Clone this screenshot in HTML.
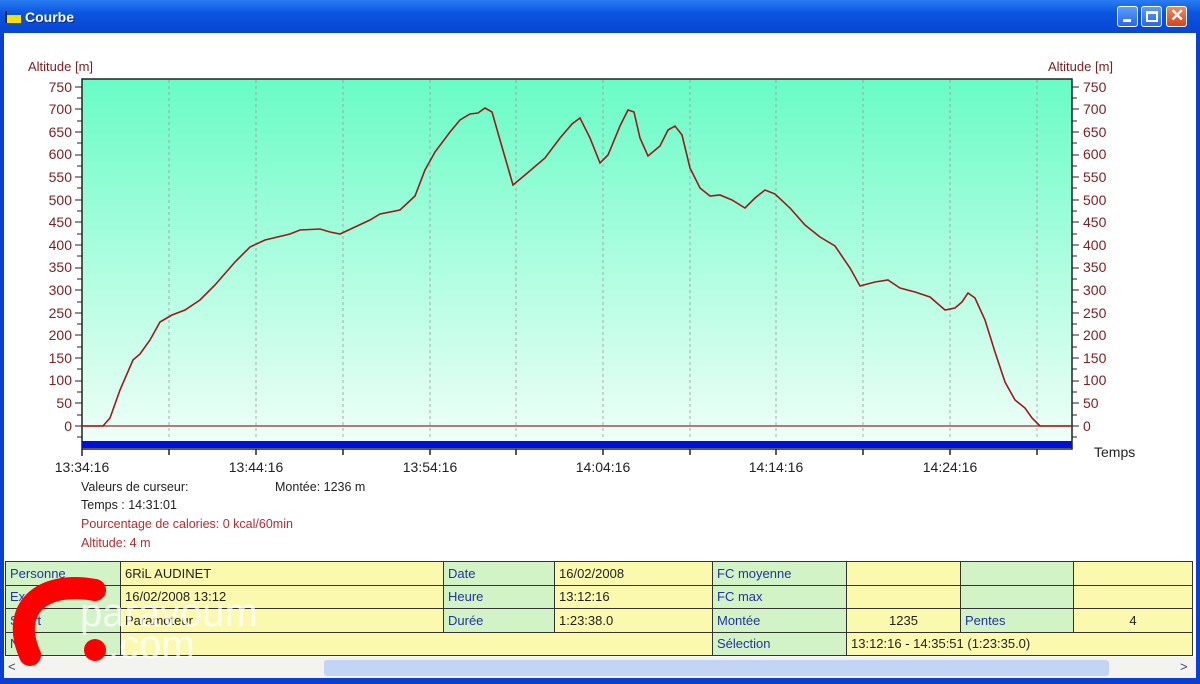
<!DOCTYPE html>
<html><head><meta charset="utf-8"><style>
*{margin:0;padding:0;box-sizing:border-box}
body{width:1200px;height:684px;overflow:hidden;background:#0a3fd6;font-family:"Liberation Sans",sans-serif;position:relative}
.title{position:absolute;left:0;top:0;width:1200px;height:33px;background:linear-gradient(#2a7cf2,#0a55e0 40%,#0845d0);}
.title span{position:absolute;left:25px;top:9px;color:#fff;font-weight:bold;font-size:14px;text-shadow:1px 1px #0a2a80}
.client{position:absolute;left:4px;top:33px;width:1192px;height:645px;background:#fff}
.btn{position:absolute;top:6px;width:21px;height:21px;border:1px solid #fff;border-radius:3px;background:linear-gradient(#5d9cf8,#2a66e8)}
table{position:absolute;left:5px;top:561px;border-collapse:collapse;font-size:13px;color:#23349c;table-layout:fixed}
td{border:1px solid #333;height:23.5px;padding:0 4px;white-space:nowrap;overflow:hidden}
.g{background:#d2f3c6}.y{background:#fbf9ad;color:#222}
</style></head><body>
<div class="title"><svg style="position:absolute;left:5px;top:11px" width="16" height="12"><rect x="0" y="4" width="16" height="8" fill="#f7e000"/><rect x="0" y="0" width="2" height="12" fill="#222"/></svg><span>Courbe</span></div>
<div class="btn" style="left:1117px"><div style="position:absolute;left:5px;top:12px;width:8px;height:3px;background:#fff"></div></div>
<div class="btn" style="left:1141px"><div style="position:absolute;left:4px;top:4px;width:12px;height:11px;border:2px solid #fff;border-top-width:3px"></div></div>
<div class="btn" style="left:1166px;background:linear-gradient(#f08a60,#d8421c)"><div style="position:absolute;left:3px;top:-1px;color:#fff;font-weight:bold;font-size:17px">✕</div></div>
<div class="client"></div>
<svg style="position:absolute;left:0;top:0" width="1200" height="560" font-family="Liberation Sans" font-size="13">
<defs><linearGradient id="bg" x1="0" y1="0" x2="0" y2="1"><stop offset="0" stop-color="#68fcc6"/><stop offset="1" stop-color="#f2fff9"/></linearGradient></defs>
<rect x="82" y="79" width="990" height="370" fill="url(#bg)" stroke="#222" stroke-width="1.5"/>
<g stroke="#999" stroke-dasharray="3,3" stroke-width="0.8">
<line x1="169" y1="80" x2="169" y2="440"/><line x1="256" y1="80" x2="256" y2="440"/><line x1="343" y1="80" x2="343" y2="440"/><line x1="430" y1="80" x2="430" y2="440"/><line x1="516" y1="80" x2="516" y2="440"/><line x1="603" y1="80" x2="603" y2="440"/><line x1="690" y1="80" x2="690" y2="440"/><line x1="776" y1="80" x2="776" y2="440"/><line x1="863" y1="80" x2="863" y2="440"/><line x1="950" y1="80" x2="950" y2="440"/><line x1="1037" y1="80" x2="1037" y2="440"/></g>
<line x1="82" y1="426" x2="1072" y2="426" stroke="#8a3030" stroke-width="1.2"/>
<rect x="82" y="441" width="990" height="7" fill="#0010d8"/>
<polyline fill="none" stroke="#a01818" stroke-width="1.6" points="82,426 103,426 110,418 120,390 133,360 140,354 150,340 160,322 172,315 185,310 200,300 215,285 235,262 250,247 265,240 290,234 300,230 320,229 330,232 340,234 355,227 370,220 380,214 400,210 415,196 425,170 435,152 450,132 460,120 470,114 478,113 485,108 492,112 500,140 513,185 525,175 545,158 560,138 572,124 580,118 590,138 600,163 608,155 620,126 628,110 634,112 640,138 648,156 660,146 668,130 675,126 682,135 690,168 700,188 710,196 720,195 732,200 745,208 755,198 765,190 775,194 790,208 805,225 820,237 835,246 850,268 860,286 875,282 888,280 900,288 915,292 930,297 945,310 955,308 962,302 968,293 975,298 985,320 995,352 1005,382 1015,400 1025,408 1032,418 1040,426 1072,426"/>
<g stroke="#222" stroke-width="1.5">
<line x1="82" y1="449" x2="82" y2="456"/><line x1="169" y1="449" x2="169" y2="455"/><line x1="256" y1="449" x2="256" y2="455"/><line x1="343" y1="449" x2="343" y2="455"/><line x1="430" y1="449" x2="430" y2="455"/><line x1="516" y1="449" x2="516" y2="455"/><line x1="603" y1="449" x2="603" y2="455"/><line x1="690" y1="449" x2="690" y2="455"/><line x1="776" y1="449" x2="776" y2="455"/><line x1="863" y1="449" x2="863" y2="455"/><line x1="950" y1="449" x2="950" y2="455"/><line x1="1037" y1="449" x2="1037" y2="455"/></g>
<g fill="#222" font-size="14" text-anchor="middle"><text x="82" y="472">13:34:16</text><text x="256" y="472">13:44:16</text><text x="430" y="472">13:54:16</text><text x="603" y="472">14:04:16</text><text x="776" y="472">14:14:16</text><text x="950" y="472">14:24:16</text></g>
<text x="1094" y="457" fill="#222" font-size="14">Temps</text>
<g fill="#7a2222" font-size="13"><text x="28" y="71">Altitude [m]</text><text x="1048" y="71">Altitude [m]</text></g>
<g fill="#7a2222" font-size="14" text-anchor="end">
<text x="72" y="92">750</text><text x="72" y="114">700</text><text x="72" y="137">650</text><text x="72" y="159">600</text><text x="72" y="182">550</text><text x="72" y="205">500</text><text x="72" y="227">450</text><text x="72" y="250">400</text><text x="72" y="272">350</text><text x="72" y="295">300</text><text x="72" y="318">250</text><text x="72" y="340">200</text><text x="72" y="363">150</text><text x="72" y="385">100</text><text x="72" y="408">50</text><text x="72" y="431">0</text></g>
<g fill="#7a2222" font-size="14"><text x="1083" y="92">750</text><text x="1083" y="114">700</text><text x="1083" y="137">650</text><text x="1083" y="159">600</text><text x="1083" y="182">550</text><text x="1083" y="205">500</text><text x="1083" y="227">450</text><text x="1083" y="250">400</text><text x="1083" y="272">350</text><text x="1083" y="295">300</text><text x="1083" y="318">250</text><text x="1083" y="340">200</text><text x="1083" y="363">150</text><text x="1083" y="385">100</text><text x="1083" y="408">50</text><text x="1083" y="431">0</text></g>
<g stroke="#222" stroke-width="1"><path d="M75 87h7M77 98h5M75 109h7M77 121h5M75 132h7M77 143h5M75 155h7M77 166h5M75 177h7M77 188h5M75 200h7M77 211h5M75 222h7M77 234h5M75 245h7M77 256h5M75 268h7M77 279h5M75 290h7M77 302h5M75 313h7M77 324h5M75 335h7M77 347h5M75 358h7M77 369h5M75 381h7M77 392h5M75 403h7M77 415h5M75 426h7M77 437h5"/>
<path d="M1072 87h7M1072 98h5M1072 109h7M1072 121h5M1072 132h7M1072 143h5M1072 155h7M1072 166h5M1072 177h7M1072 188h5M1072 200h7M1072 211h5M1072 222h7M1072 234h5M1072 245h7M1072 256h5M1072 268h7M1072 279h5M1072 290h7M1072 302h5M1072 313h7M1072 324h5M1072 335h7M1072 347h5M1072 358h7M1072 369h5M1072 381h7M1072 392h5M1072 403h7M1072 415h5M1072 426h7M1072 437h5"/></g>
<g font-size="12.5"><text x="81" y="491" fill="#222">Valeurs de curseur:</text><text x="275" y="491" fill="#222">Montée: 1236 m</text><text x="81" y="509" fill="#222">Temps : 14:31:01</text><text x="81" y="528" fill="#b03030">Pourcentage de calories: 0 kcal/60min</text><text x="81" y="547" fill="#b03030">Altitude: 4 m</text></g>
</svg>
<table>
<colgroup><col style="width:115px"><col style="width:323px"><col style="width:111px"><col style="width:158px"><col style="width:134px"><col style="width:114px"><col style="width:113px"><col style="width:119px"></colgroup>
<tr><td class="g">Personne</td><td class="y">6RiL AUDINET</td><td class="g">Date</td><td class="y">16/02/2008</td><td class="g">FC moyenne</td><td class="y"></td><td class="g"></td><td class="y"></td></tr>
<tr><td class="g">Exo</td><td class="y">16/02/2008 13:12</td><td class="g">Heure</td><td class="y">13:12:16</td><td class="g">FC max</td><td class="y"></td><td class="g"></td><td class="y"></td></tr>
<tr><td class="g">Sport</td><td class="y">Paramoteur</td><td class="g">Durée</td><td class="y">1:23:38.0</td><td class="g">Montée</td><td class="y" style="text-align:center">1235</td><td class="g">Pentes</td><td class="y" style="text-align:center">4</td></tr>
<tr><td class="g">Note</td><td class="y" colspan="3"></td><td class="g">Sélection</td><td class="y" colspan="3">13:12:16 - 14:35:51 (1:23:35.0)</td></tr>
</table>
<div style="position:absolute;left:4px;top:657px;width:1192px;height:21px;background:#f3f3f0"></div>
<div style="position:absolute;left:324px;top:660px;width:785px;height:16px;background:#c4d4f5;border-radius:3px"></div>
<div style="position:absolute;left:8px;top:659px;font-size:13px;color:#446">&lt;</div>
<div style="position:absolute;left:1180px;top:659px;font-size:13px;color:#446">&gt;</div>
<svg style="position:absolute;left:0;top:570px" width="300" height="100">
<path d="M30 85 C10 40 40 10 95 20" fill="none" stroke="#f00" stroke-width="22" stroke-linecap="round"/>
<circle cx="95" cy="80" r="11" fill="#f00"/>
<text x="80" y="56" font-size="40" fill="#fff" fill-opacity="0.75" font-family="Liberation Sans">paravoum</text>
<text x="108" y="88" font-size="40" fill="#fff" fill-opacity="0.75" font-family="Liberation Sans">.com</text>
</svg>
</body></html>
